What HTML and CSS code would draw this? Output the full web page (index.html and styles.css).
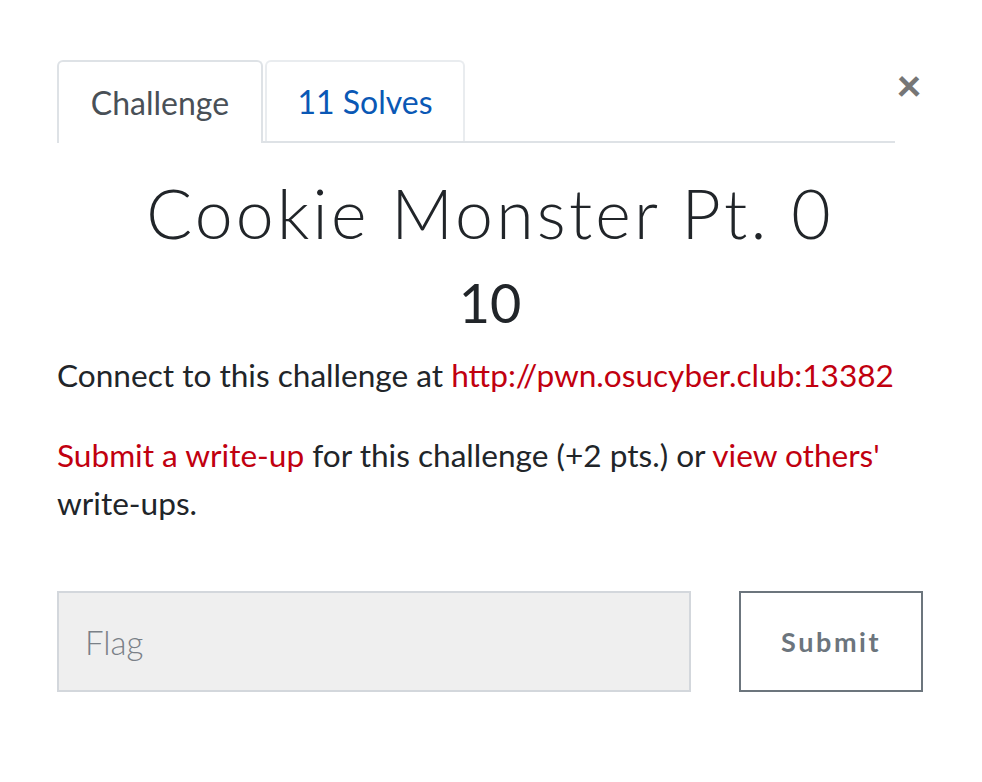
FILE: index.html
```html
<!DOCTYPE html>
<html lang="en">
<head>
<meta charset="utf-8">
<title>Cookie Monster Pt. 0</title>
<link rel="stylesheet" href="styles.css">
</head>
<body>
<div class="modal">
  <div class="head">
    <ul class="tabs">
      <li class="tab active">Challenge</li>
      <li class="tab">11 Solves</li>
    </ul>
    <button class="close" aria-label="Close">&times;</button>
  </div>
  <h1 class="title">Cookie Monster Pt. 0</h1>
  <div class="value">10</div>
  <p class="desc">Connect to this challenge at <a href="#">http://pwn.osucyber.club:13382</a></p>
  <p class="desc"><a href="#">Submit a write-up</a> for this challenge (+2 pts.) or <a href="#">view others'</a> write-ups.</p>
  <form class="submit-row">
    <input class="flag" type="text" placeholder="Flag">
    <button class="btn" type="button">Submit</button>
  </form>
</div>
</body>
</html>
```
FILE: styles.css
```css
html, body { margin: 0; padding: 0; background: #fff; }
body { font-family: "Lato", "Liberation Sans", sans-serif; color: #212529; }
.modal { width: 866px; padding: 60px 0 0 57px; }
.head { display: flex; align-items: flex-start; }
.tabs { list-style: none; margin: 0; padding: 0; display: flex; width: 839px; border-bottom: 2px solid #dee2e6; height: 81px; }
.tab { width: 200px; height: 81px; box-sizing: border-box; border: 2px solid #e9ecef; border-bottom: none; border-radius: 6px 6px 0 0; margin-right: 2px; display: flex; align-items: center; justify-content: center; font-size: 32px; color: #0a58b5; margin-bottom: -2px; background: #fff; }
.tab.active { color: #495057; border-color: #dee2e6; height: 83px; width: 206px; }
.close { margin-left: auto; border: 0; background: none; padding: 0; font-family: "Lato", sans-serif; font-size: 44px; font-weight: 900; color: #767676; line-height: 1; margin-top: 2px; width: 28px; }
.title { margin: 30px 0 0; text-align: center; font-family: "Lato", sans-serif; font-weight: 300; font-size: 68px; letter-spacing: 3.2px; line-height: 80px; color: #212529; }
.value { text-align: center; font-size: 54px; font-weight: 400; line-height: 64px; margin-top: 18px; }
.desc { font-size: 31.6px; line-height: 48px; margin: 16px 0 0; }
.desc + .desc { margin-top: 32px; }
.desc a { color: #c1000f; text-decoration: none; }
.submit-row { display: flex; gap: 48px; margin-top: 64px; }
.flag { width: 635px; height: 101px; box-sizing: border-box; background: #efefef; border: 2px solid #d3d7dc; padding: 0 26px; font-family: "Lato", sans-serif; font-weight: 300; font-size: 33px; color: #495057; }
.flag::placeholder { color: #7a8087; }
.btn { width: 184px; height: 101px; box-sizing: border-box; background: #fff; border: 2px solid #6c757d; font-family: "Lato", sans-serif; font-size: 27px; font-weight: 700; letter-spacing: 2.6px; color: #6c757d; }
```
